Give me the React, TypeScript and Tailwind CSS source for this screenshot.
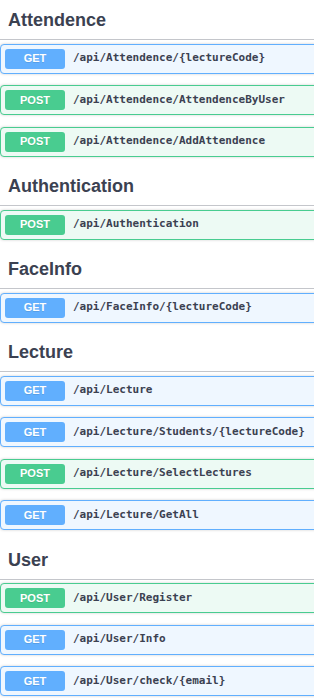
import React from 'react';

type Op = { method: 'GET' | 'POST'; path: string };
type Section = { name: string; ops: Op[] };

const sections: Section[] = [
    {
        name: 'Attendence',
        ops: [
            { method: 'GET', path: '/api/Attendence/{lectureCode}' },
            { method: 'POST', path: '/api/Attendence/AttendenceByUser' },
            { method: 'POST', path: '/api/Attendence/AddAttendence' },
        ],
    },
    { name: 'Authentication', ops: [{ method: 'POST', path: '/api/Authentication' }] },
    { name: 'FaceInfo', ops: [{ method: 'GET', path: '/api/FaceInfo/{lectureCode}' }] },
    {
        name: 'Lecture',
        ops: [
            { method: 'GET', path: '/api/Lecture' },
            { method: 'GET', path: '/api/Lecture/Students/{lectureCode}' },
            { method: 'POST', path: '/api/Lecture/SelectLectures' },
            { method: 'GET', path: '/api/Lecture/GetAll' },
        ],
    },
    {
        name: 'User',
        ops: [
            { method: 'POST', path: '/api/User/Register' },
            { method: 'GET', path: '/api/User/Info' },
            { method: 'GET', path: '/api/User/check/{email}' },
        ],
    },
];

const OpBlock = ({ op }: { op: Op }) => {
    const isGet = op.method === 'GET';
    return (
        <div
            className={`flex items-center h-[30px] mb-[11.5px] px-[4px] border rounded-[4px] shadow-[0_0_3px_rgba(0,0,0,0.19)] ${isGet ? 'bg-[#eff7ff] border-[#61affe]' : 'bg-[#edfaf4] border-[#49cc90]'
                }`}
        >
            <span
                className={`w-[60px] h-[20px] rounded-[3px] flex items-center justify-center text-white text-[11px] font-bold font-['Liberation_Sans',Arial,sans-serif] [text-shadow:0_1px_0_rgba(0,0,0,0.1)] ${isGet ? 'bg-[#61affe]' : 'bg-[#49cc90]'
                    }`}
            >
                {op.method}
            </span>
            <span className="pl-[8px] text-[11px] font-bold text-[#3b4151] font-['DejaVu_Sans_Mono',monospace] whitespace-nowrap">
                {op.path}
            </span>
        </div>
    );
};

export default function App() {
    return (
        <div className="w-[314px] h-[698px] overflow-hidden bg-white">
            <div className="w-[330px] pt-[2px]">
                {sections.map((s) => (
                    <div key={s.name}>
                        {/* Tag header */}
                        <div className="h-[38px] flex items-center pl-[8px] border-b border-[#c4c6cb] mb-[3.5px]">
                            <h3 className="text-[18px] font-bold text-[#3b4151] font-['Liberation_Sans',Arial,sans-serif]">
                                {s.name}
                            </h3>
                        </div>
                        {s.ops.map((op) => (
                            <OpBlock key={op.method + op.path} op={op} />
                        ))}
                    </div>
                ))}
            </div>
        </div>
    );
}
